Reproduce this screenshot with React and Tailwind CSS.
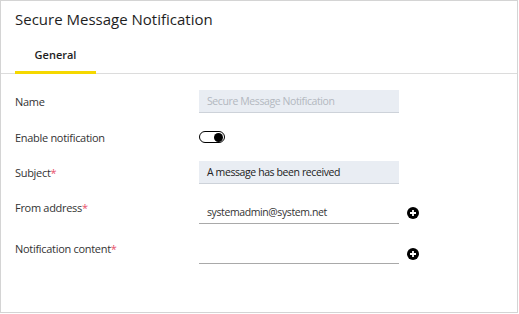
import React from "react";

function PlusIcon() {
  return (
    <svg width="12" height="12" viewBox="0 0 12 12" className="shrink-0">
      <circle cx="6" cy="6" r="6" fill="#000" />
      <path d="M6 3v6M3 6h6" stroke="#fff" strokeWidth="1.8" />
    </svg>
  );
}

function Req() {
  return <span className="text-[#e8506a]">*</span>;
}

export default function App() {
  return (
    <div
      className="w-[518px] h-[313px] border border-[#d4d4d4] bg-white text-[#333]"
      style={{ fontFamily: '"Open Sans", "Liberation Sans", sans-serif' }}
    >
      <div className="px-[14px] pt-[8px] text-[15px] leading-[20px] text-[#1e1e1e]">
        Secure Message Notification
      </div>
      <div className="mt-[17px] flex border-b border-[#dcdcdc] px-[14px]">
        <div className="-mb-px w-[81px] border-b-[3px] border-[#f5d800] pb-[9px] pt-[1px] text-center text-[11px] font-semibold leading-[15px] text-[#1e1e1e]">
          General
        </div>
      </div>

      <div className="flex flex-col px-[14px] text-[11px] leading-[15px] tracking-[-0.3px]">
        <div className="mt-[16px] flex h-[23px] items-center">
          <div className="w-[184px]">Name</div>
          <div className="flex h-[23px] w-[200px] items-center border-b border-[#cdd2d9] bg-[#e9edf3] px-[8px] text-[10.5px] tracking-[-0.4px] text-[#b3b8c0]">
            Secure Message Notification
          </div>
        </div>

        <div className="mt-[18px] flex h-[12px] items-center">
          <div className="w-[184px]">Enable notification</div>
          <div className="flex h-[12px] w-[26px] items-center justify-end rounded-full border-[1.5px] border-black bg-white pr-[1px]">
            <div className="h-[9px] w-[9px] rounded-full bg-black" />
          </div>
        </div>

        <div className="mt-[18px] flex h-[23px] items-center">
          <div className="w-[184px]">
            Subject<Req />
          </div>
          <div className="flex h-[23px] w-[200px] items-center border-b border-[#cdd2d9] bg-[#e9edf3] px-[8px] text-[10.5px] tracking-[-0.4px] text-[#222]">
            A message has been received
          </div>
        </div>

        <div className="mt-[17px] flex h-[23px] items-start">
          <div className="-mt-[1px] w-[184px]">
            From address<Req />
          </div>
          <div className="flex items-center gap-[8px]">
            <div className="flex h-[23px] w-[200px] items-center border-b border-[#a9a9a9] px-[8px] text-[10.5px] tracking-[-0.4px] text-[#333]">
              systemadmin@system.net
            </div>
            <PlusIcon />
          </div>
        </div>

        <div className="mt-[17px] flex h-[23px] items-start">
          <div className="w-[184px]">
            Notification content<Req />
          </div>
          <div className="flex items-center gap-[8px]">
            <div className="h-[23px] w-[200px] border-b border-[#a9a9a9]" />
            <div className="mt-[2px]">
              <PlusIcon />
            </div>
          </div>
        </div>
      </div>
    </div>
  );
}
